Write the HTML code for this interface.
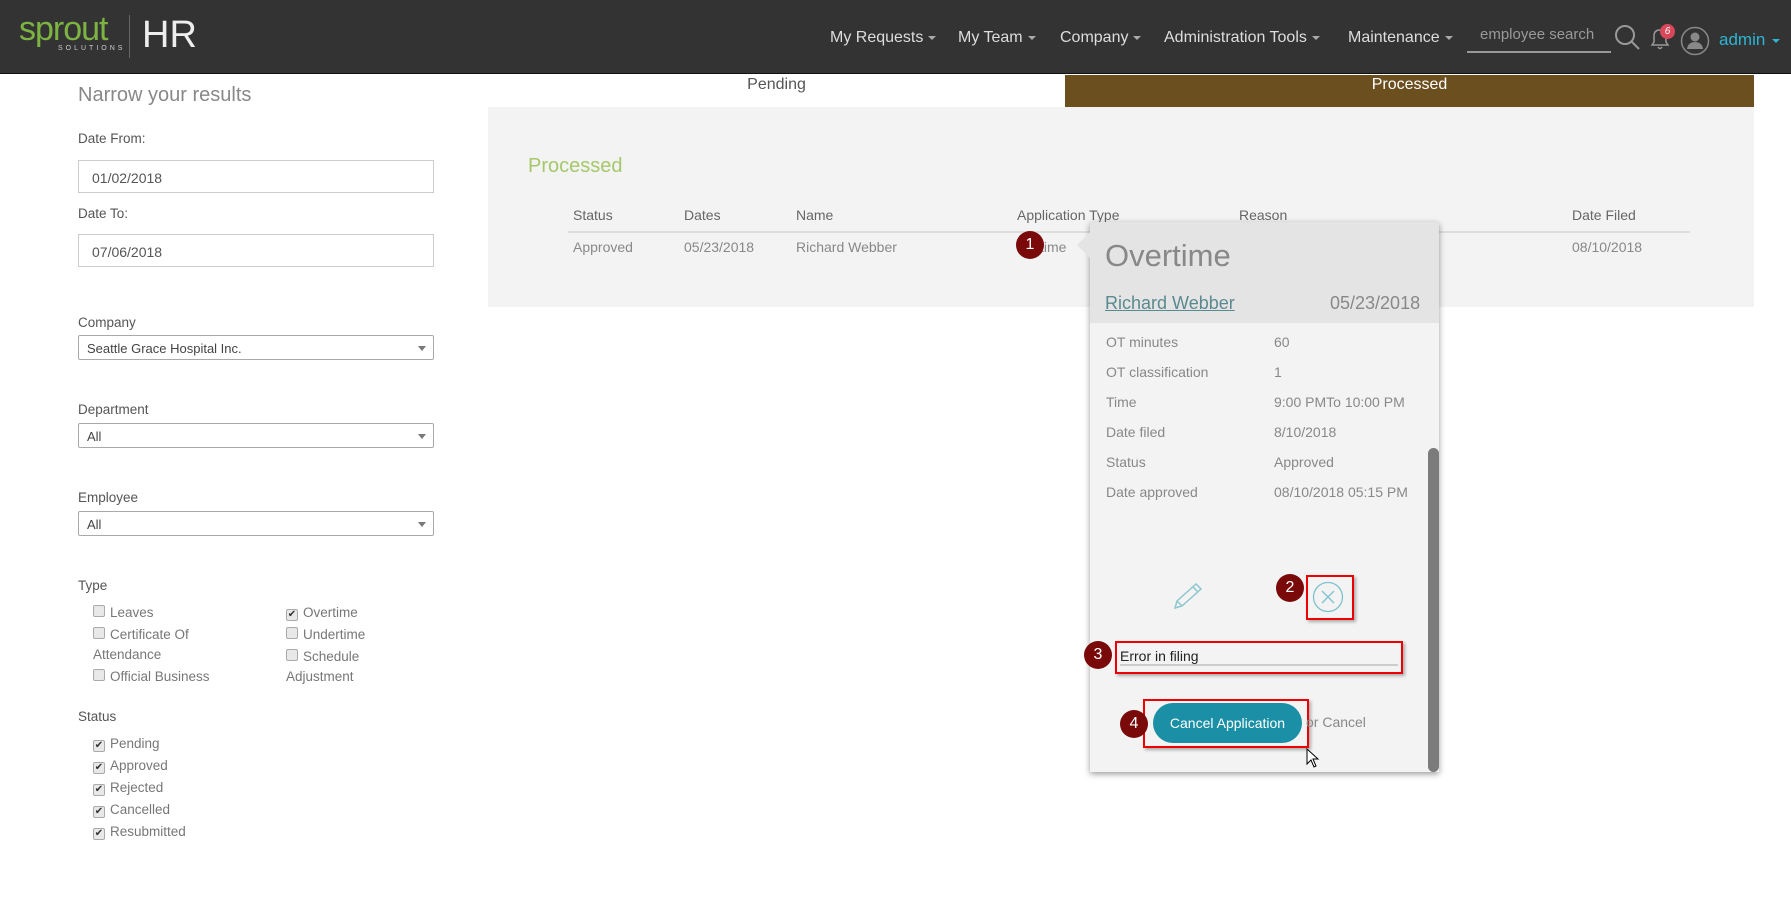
<!DOCTYPE html>
<html><head><meta charset="utf-8"><style>
*{box-sizing:border-box;margin:0;padding:0}
body{width:1791px;height:897px;background:#fff;font-family:"Liberation Sans",sans-serif;color:#666;position:relative;overflow:hidden}
.a{position:absolute;white-space:nowrap}
.hdr{position:absolute;left:0;top:0;width:1791px;height:74px;background:#333;border-bottom:1px solid #111}
.nav{font-size:16px;color:#ddd;top:29px}
.car{display:inline-block;border-left:4px solid transparent;border-right:4px solid transparent;border-top:4px solid #aaa;vertical-align:middle;margin-left:5px}
.lbl{font-size:13.5px;color:#555}
.inp{position:absolute;left:78px;width:356px;height:33px;border:1px solid #ccc;background:#fff;font-size:14px;color:#555;padding:9px 13px}
.sel{position:absolute;left:78px;width:356px;height:25px;border:1px solid #aaa;border-radius:2px;background:#fff;font-size:13px;color:#444;padding:5px 8px}
.sel:after{content:"";position:absolute;right:7px;top:10px;border-left:4px solid transparent;border-right:4px solid transparent;border-top:5px solid #777}
.cb{font-size:13.5px;color:#777}
.cb i{display:inline-block;width:12px;height:12px;border:1px solid #aaa;border-radius:2px;background:#e8e8e8;margin-right:5px;vertical-align:0;font-style:normal;font-size:10px;line-height:10px;text-align:center;color:#333}
.th{font-size:14px;color:#666;top:207px}
.td{font-size:14px;color:#888;top:239px}
.dl{font-size:14px;color:#888;left:1106px}
.dv{font-size:14px;color:#888;left:1274px}
.bd{position:absolute;width:28px;height:28px;border-radius:50%;background:#7a0a0a;color:#fff;font-size:16px;text-align:center;line-height:28px}
.rb{position:absolute;border:2px solid #e00;box-shadow:2px 2px 3px rgba(0,0,0,.3)}
</style></head><body>
<div class="hdr"></div>
<div class="a" style="left:19px;top:10px;font-size:34px;color:#7cb342;letter-spacing:-1px">sprout</div>
<div class="a" style="left:58px;top:45px;font-size:7px;color:#ccc;letter-spacing:3px">SOLUTIONS</div>
<div class="a" style="left:129px;top:15px;width:1px;height:43px;background:#666"></div>
<div class="a" style="left:142px;top:14px;font-size:38px;color:#eee;font-weight:300">HR</div>
<div class="a nav" style="left:830px">My Requests<span class="car"></span></div>
<div class="a nav" style="left:958px">My Team<span class="car"></span></div>
<div class="a nav" style="left:1060px">Company<span class="car"></span></div>
<div class="a nav" style="left:1164px">Administration Tools<span class="car"></span></div>
<div class="a nav" style="left:1348px">Maintenance<span class="car"></span></div>
<div class="a" style="left:1480px;top:26px;font-size:15px;color:#999">employee search</div>
<div class="a" style="left:1467px;top:51px;width:144px;height:2px;background:#999"></div>
<svg class="a" style="left:1614px;top:24px" width="28" height="28"><circle cx="11" cy="11" r="9" fill="none" stroke="#999" stroke-width="2"/><line x1="17" y1="17" x2="25" y2="25" stroke="#999" stroke-width="2"/></svg>
<svg class="a" style="left:1648px;top:26px" width="24" height="26"><path d="M4 19 L6 16 L6 10 Q6 4 12 4 Q18 4 18 10 L18 16 L20 19 Z M10 21 Q12 24 14 21" fill="none" stroke="#999" stroke-width="1.5"/></svg>
<div class="a" style="left:1660px;top:24px;width:15px;height:15px;border-radius:50%;background:#d9475a;color:#fff;font-size:10px;text-align:center;line-height:15px;font-style:italic">6</div>
<svg class="a" style="left:1680px;top:26px" width="30" height="30"><circle cx="15" cy="15" r="13.5" fill="none" stroke="#888" stroke-width="1.5"/><circle cx="15" cy="11" r="4.5" fill="#888"/><path d="M7 23 Q8 16 15 16 Q22 16 23 23 Z" fill="#888"/></svg>
<div class="a" style="left:1719px;top:30px;font-size:17px;color:#2cb5d4">admin<span class="car" style="border-top-color:#2cb5d4;margin-left:7px"></span></div>

<div class="a" style="left:78px;top:84px;font-size:20px;color:#888;font-weight:300">Narrow your results</div>
<div class="a lbl" style="left:78px;top:131px">Date From:</div>
<div class="inp" style="top:160px">01/02/2018</div>
<div class="a lbl" style="left:78px;top:206px">Date To:</div>
<div class="inp" style="top:234px">07/06/2018</div>
<div class="a lbl" style="left:78px;top:315px">Company</div>
<div class="sel" style="top:335px">Seattle Grace Hospital Inc.</div>
<div class="a lbl" style="left:78px;top:402px">Department</div>
<div class="sel" style="top:423px">All</div>
<div class="a lbl" style="left:78px;top:490px">Employee</div>
<div class="sel" style="top:511px">All</div>
<div class="a lbl" style="left:78px;top:578px">Type</div>
<div class="a cb" style="left:93px;top:605px"><i></i>Leaves</div>
<div class="a cb" style="left:93px;top:627px"><i></i>Certificate Of</div>
<div class="a cb" style="left:93px;top:647px">Attendance</div>
<div class="a cb" style="left:93px;top:669px"><i></i>Official Business</div>
<div class="a cb" style="left:286px;top:605px"><i>✔</i>Overtime</div>
<div class="a cb" style="left:286px;top:627px"><i></i>Undertime</div>
<div class="a cb" style="left:286px;top:649px"><i></i>Schedule</div>
<div class="a cb" style="left:286px;top:669px">Adjustment</div>
<div class="a lbl" style="left:78px;top:709px">Status</div>
<div class="a cb" style="left:93px;top:736px"><i>✔</i>Pending</div>
<div class="a cb" style="left:93px;top:758px"><i>✔</i>Approved</div>
<div class="a cb" style="left:93px;top:780px"><i>✔</i>Rejected</div>
<div class="a cb" style="left:93px;top:802px"><i>✔</i>Cancelled</div>
<div class="a cb" style="left:93px;top:824px"><i>✔</i>Resubmitted</div>

<div class="a" style="left:488px;top:75px;width:577px;height:32px;text-align:center;font-size:16px;color:#555;line-height:20px">Pending</div>
<div class="a" style="left:1065px;top:75px;width:689px;height:32px;background:#6b4f1f;text-align:center;font-size:16px;color:#fff;line-height:20px">Processed</div>
<div class="a" style="left:488px;top:107px;width:1266px;height:200px;background:#f3f3f3"></div>
<div class="a" style="left:528px;top:155px;font-size:20px;color:#a5c86a;font-weight:300">Processed</div>
<div class="a th" style="left:573px">Status</div>
<div class="a th" style="left:684px">Dates</div>
<div class="a th" style="left:796px">Name</div>
<div class="a th" style="left:1017px">Application Type</div>
<div class="a th" style="left:1239px">Reason</div>
<div class="a th" style="left:1572px">Date Filed</div>
<div class="a" style="left:568px;top:231px;width:1122px;height:2px;background:#ddd"></div>
<div class="a td" style="left:573px">Approved</div>
<div class="a td" style="left:684px">05/23/2018</div>
<div class="a td" style="left:796px">Richard Webber</div>
<div class="a td" style="left:1040px">time</div>
<div class="a td" style="left:1572px">08/10/2018</div>

<div class="a" style="left:1090px;top:222px;width:349px;height:550px;background:#f3f3f3;box-shadow:0 2px 6px rgba(0,0,0,.4)"></div>
<div class="a" style="left:1077px;top:231px;width:0;height:0;border-top:14px solid transparent;border-bottom:14px solid transparent;border-right:14px solid #e4e4e4"></div>
<div class="a" style="left:1090px;top:222px;width:349px;height:101px;background:#e4e4e4"></div>
<div class="a" style="left:1105px;top:238px;font-size:31px;color:#888">Overtime</div>
<div class="a" style="left:1105px;top:293px;font-size:18px;color:#5a8a8f;text-decoration:underline">Richard Webber</div>
<div class="a" style="left:1330px;top:293px;font-size:18px;color:#888">05/23/2018</div>
<div class="a dl" style="top:334px">OT minutes</div><div class="a dv" style="top:334px">60</div>
<div class="a dl" style="top:364px">OT classification</div><div class="a dv" style="top:364px">1</div>
<div class="a dl" style="top:394px">Time</div><div class="a dv" style="top:394px">9:00 PMTo 10:00 PM</div>
<div class="a dl" style="top:424px">Date filed</div><div class="a dv" style="top:424px">8/10/2018</div>
<div class="a dl" style="top:454px">Status</div><div class="a dv" style="top:454px">Approved</div>
<div class="a dl" style="top:484px">Date approved</div><div class="a dv" style="top:484px">08/10/2018 05:15 PM</div>
<div class="a" style="left:1428px;top:448px;width:11px;height:324px;background:#7b7b7b;border-radius:6px"></div>
<svg class="a" style="left:1172px;top:581px" width="34" height="30"><path d="M3 27 L5 20 L24 3 L29 8 L10 25 Z M5 20 L10 25 M21 6 L26 11" fill="none" stroke="#8cc6cf" stroke-width="1.5"/></svg>
<div class="rb" style="left:1306px;top:575px;width:48px;height:45px"></div>
<svg class="a" style="left:1312px;top:581px" width="32" height="32"><circle cx="16" cy="16" r="14.5" fill="none" stroke="#7cc3cf" stroke-width="1.3"/><path d="M10 10 L22 22 M22 10 L10 22" stroke="#7cc3cf" stroke-width="1.3"/></svg>
<div class="bd" style="left:1276px;top:574px">2</div>
<div class="rb" style="left:1115px;top:641px;width:288px;height:33px"></div>
<div class="a" style="left:1120px;top:648px;font-size:14px;color:#222">Error in filing</div>
<div class="a" style="left:1120px;top:664px;width:278px;height:2px;background:#ccc"></div>
<div class="bd" style="left:1084px;top:641px">3</div>
<div class="a" style="left:1153px;top:703px;width:149px;height:40px;border-radius:20px;background:#1a8fa5;color:#fff;font-size:14px;text-align:center;line-height:40px">Cancel Application</div>
<div class="rb" style="left:1143px;top:699px;width:166px;height:49px"></div>
<div class="a" style="left:1306px;top:714px;font-size:14px;color:#888">or Cancel</div>
<div class="bd" style="left:1120px;top:710px">4</div>
<svg class="a" style="left:1306px;top:748px" width="14" height="22"><path d="M1 1 L1 16 L5 12 L8 19 L10 18 L7 11 L12 11 Z" fill="#fff" stroke="#000" stroke-width="1"/></svg>
<div class="bd" style="left:1016px;top:231px">1</div>
</body></html>
